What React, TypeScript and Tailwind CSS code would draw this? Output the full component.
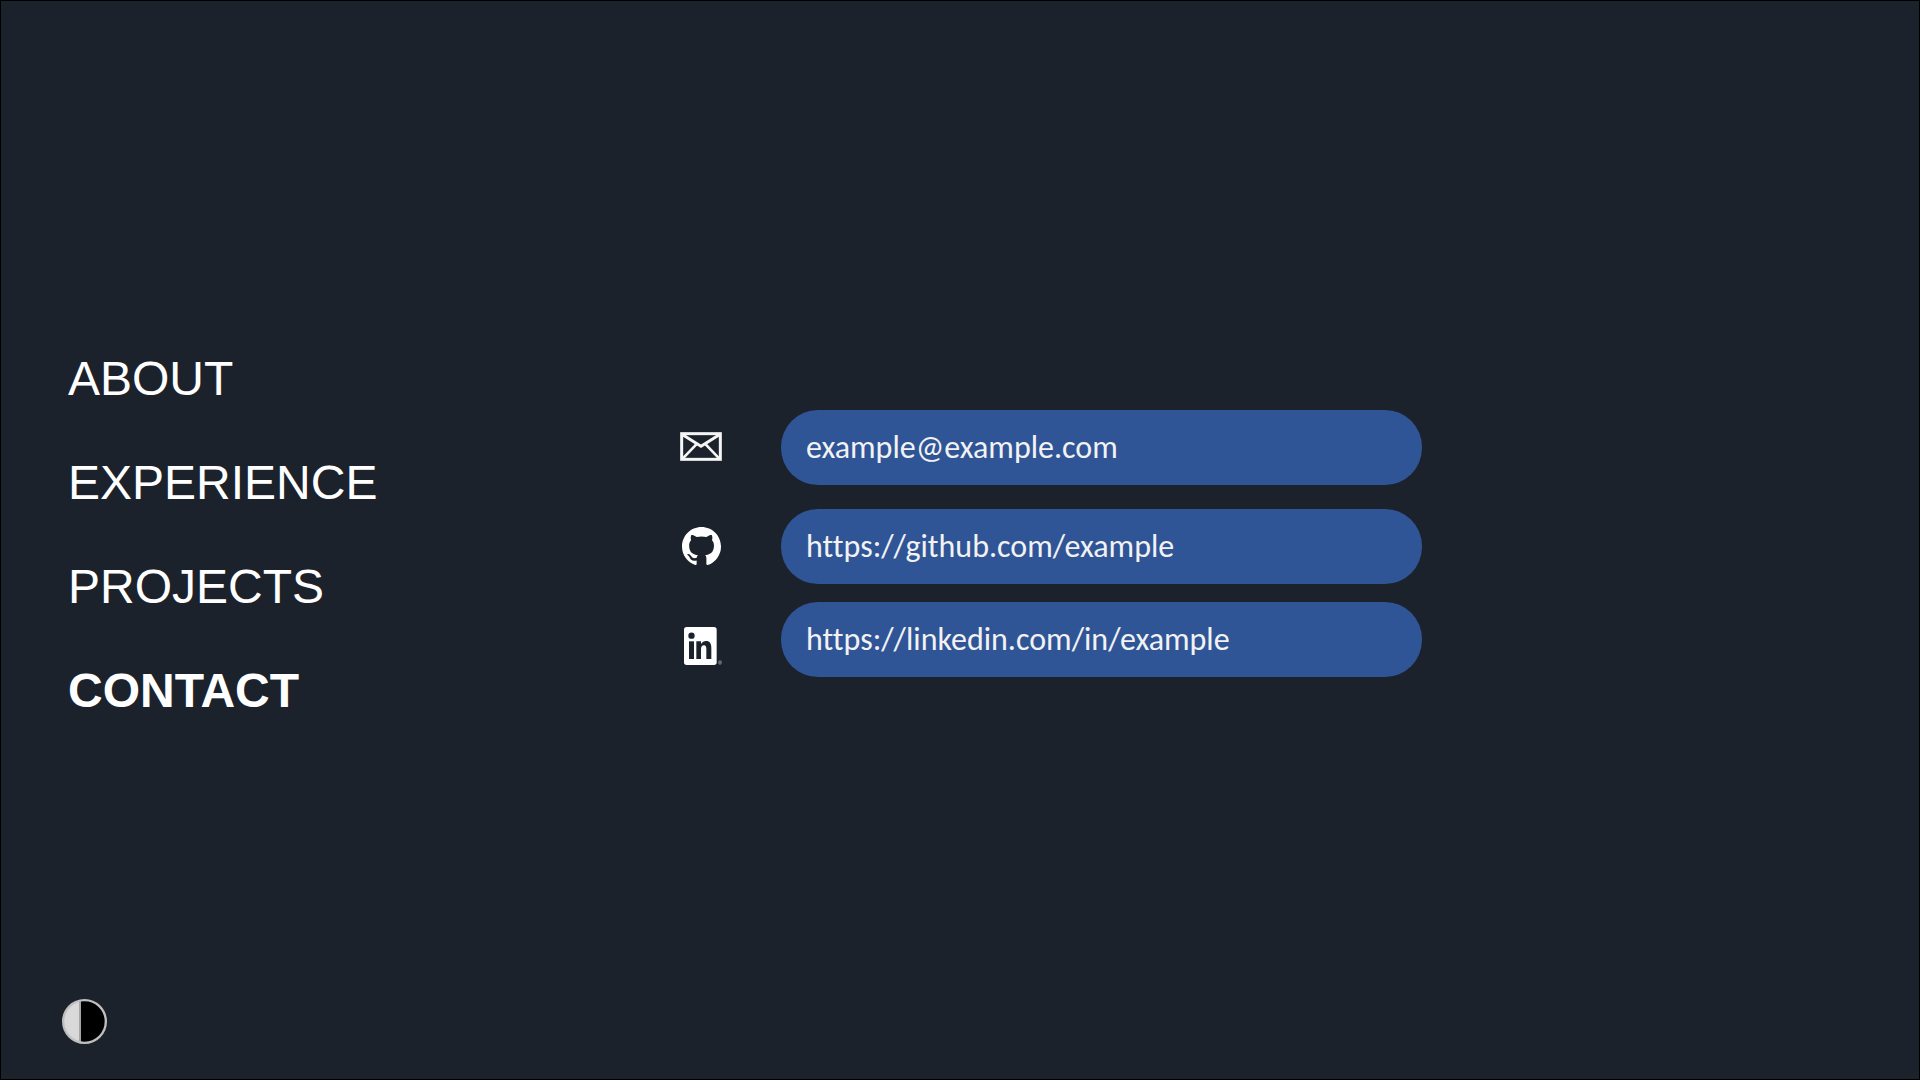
import { useState } from "react";

const sections = ["ABOUT", "EXPERIENCE", "PROJECTS", "CONTACT"];

function MailIcon() {
  return (
    <svg viewBox="0 0 126 87" className="h-[29px] w-[42px]" fill="none" stroke="#f5f5f5" aria-hidden="true">
      <rect x="5" y="5" width="116" height="77" strokeWidth="9" />
      <path d="M8 8 L63 43 L118 8" strokeWidth="9" />
      <path d="M8 80 L49 37 M118 80 L77 37" strokeWidth="8" />
    </svg>
  );
}

function GithubIcon() {
  return (
    <svg viewBox="0 0 16 16" className="h-[39px] w-[39px]" fill="#ffffff" aria-hidden="true">
      <path d="M8 0C3.58 0 0 3.58 0 8c0 3.54 2.29 6.53 5.47 7.59.4.07.55-.17.55-.38 0-.19-.01-.82-.01-1.49-2.01.37-2.53-.49-2.69-.94-.09-.23-.48-.94-.82-1.13-.28-.15-.68-.52-.01-.53.63-.01 1.08.58 1.23.82.72 1.21 1.87.87 2.33.66.07-.52.28-.87.51-1.07-1.78-.2-3.64-.89-3.64-3.95 0-.87.31-1.59.82-2.15-.08-.2-.36-1.02.08-2.12 0 0 .67-.21 2.2.82.64-.18 1.32-.27 2-.27s1.36.09 2 .27c1.53-1.04 2.2-.82 2.2-.82.44 1.1.16 1.92.08 2.12.51.56.82 1.27.82 2.15 0 3.07-1.87 3.75-3.65 3.95.29.25.54.73.54 1.48 0 1.07-.01 1.93-.01 2.2 0 .21.15.46.55.38A8.01 8.01 0 0 0 16 8c0-4.42-3.58-8-8-8Z" />
    </svg>
  );
}

function LinkedinIcon() {
  return (
    <svg viewBox="60 84 126 114" className="h-[38px] w-[42px]" aria-hidden="true">
      <rect x="72" y="84" width="98" height="114" rx="8" fill="#ffffff" />
      <g fill="#1c222c">
        <circle cx="94.500" cy="110" r="9.500" />
        <rect x="87" y="127" width="15" height="53" />
        <path d="M109 127h14v8c4-6 9-9 15-9 12 0 16 8 16 22v32h-15v-29c0-8-2-12-7-12-6 0-9 4-9 12v29h-14z" />
      </g>
      <rect x="176" y="185" width="8" height="11" rx="3" fill="#5d636b" stroke="#7b8087" strokeWidth="2" />
    </svg>
  );
}

function ContrastIcon() {
  return (
    <svg viewBox="0 0 135 135" className="size-[45px]" aria-hidden="true">
      <circle cx="67.500" cy="67.500" r="64" fill="#000000" />
      <path d="M54 4 A65 65 0 0 0 54 131 Z" fill="#d9d9d9" />
      <path d="M54 3v129" stroke="#a6a6a6" strokeWidth="6" />
      <circle cx="67.500" cy="67.500" r="64" fill="none" stroke="#bfbfbf" strokeWidth="7" />
    </svg>
  );
}

const contacts = [
  { name: "Email", text: "example@example.com", href: "mailto:example@example.com", Icon: MailIcon, gap: "mb-6" },
  { name: "GitHub", text: "https://github.com/example", href: "https://github.com/example", Icon: GithubIcon, gap: "mb-[18px]" },
  { name: "LinkedIn", text: "https://linkedin.com/in/example", href: "https://linkedin.com/in/example", Icon: LinkedinIcon, gap: "" },
];

export default function App() {
  const [inverted, setInverted] = useState(false);

  return (
    <div className="grid min-h-screen grid-rows-[1fr_auto_1fr] border border-black bg-[#1c222c] text-white">
      <div />
      <main className="grid grid-cols-[612fr_742fr_497fr] items-start pl-[67px]">
        <nav aria-label="Sections" className="pb-[10px]">
          <ul className="flex flex-col items-start gap-12 font-['Liberation_Sans',Arial,sans-serif] text-5xl leading-[56px]">
            {sections.map((name) => (
              <li key={name}>
                <a href={`#${name.toLowerCase()}`} className={name === "CONTACT" ? "font-bold" : ""}>
                  {name}
                </a>
              </li>
            ))}
          </ul>
        </nav>
        <section aria-label="Contact" className="flex gap-[59px] pt-[59px]">
          <div className="flex flex-col gap-7">
            {contacts.map(({ name, href, Icon }) => (
              <a key={name} href={href} aria-label={name} className="flex h-[72px] w-[42px] items-center justify-center">
                <Icon />
              </a>
            ))}
          </div>
          <div className="flex flex-1 flex-col">
            {contacts.map(({ name, text, href, gap }) => (
              <a
                key={name}
                href={href}
                className={`flex h-[75px] items-center rounded-[37px] bg-[#2f5597] px-[25px] font-['Carlito','Lato',sans-serif] text-[32px] text-[#f2f2f2] [font-variant-ligatures:none] ${gap}`}
              >
                {text}
              </a>
            ))}
          </div>
        </section>
      </main>
      <footer className="flex items-end pb-[35px] pl-[61px]">
        <button type="button" aria-label="Toggle theme" aria-pressed={inverted} onClick={() => setInverted(!inverted)}>
          <ContrastIcon />
        </button>
      </footer>
    </div>
  );
}
